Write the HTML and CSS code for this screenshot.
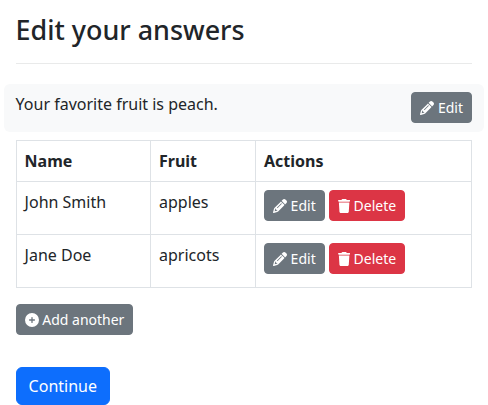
FILE: index.html
```html
<!DOCTYPE html>
<html lang="en">
<head>
<meta charset="utf-8">
<title>Edit your answers</title>
<link rel="stylesheet" href="styles.css">
</head>
<body>
<svg class="sprite" aria-hidden="true">
<symbol id="pencil" viewBox="0 0 512 512"><path d="M410.3 231l11.3-11.3-33.9-33.9-62.1-62.1L291.7 89.8l-11.3 11.3-22.6 22.6L58.6 322.9c-10.4 10.4-18 23.3-22.2 37.4L1 480.7c-2.5 8.4-.2 17.5 6.1 23.7s15.3 8.5 23.7 6.1l120.3-35.4c14.1-4.2 27-11.8 37.4-22.2L387.7 253.7 410.3 231zM160 399.4l-9.1 22.7c-4 3.1-8.5 5.4-13.3 6.9L59.4 452l23-78.1c1.4-4.9 3.8-9.4 6.9-13.3l22.7-9.1v32c0 8.8 7.2 16 16 16h32zM362.7 18.7L348.3 33.2 325.7 55.8 314.3 67.1l33.9 33.9 62.1 62.1 33.9 33.9 11.3-11.3 22.6-22.6 14.5-14.5c25-25 25-65.5 0-90.5L453.3 18.7c-25-25-65.5-25-90.5 0zm-47.4 168l-144 144c-6.2 6.2-16.4 6.2-22.6 0s-6.2-16.4 0-22.6l144-144c6.2-6.2 16.4-6.2 22.6 0s6.2 16.4 0 22.6z"/></symbol>
<symbol id="trash" viewBox="0 0 448 512"><path d="M135.2 17.7L128 32H32C14.3 32 0 46.3 0 64S14.3 96 32 96H416c17.7 0 32-14.3 32-32s-14.3-32-32-32H320l-7.2-14.3C307.4 6.8 296.3 0 284.2 0H163.8c-12.1 0-23.2 6.8-28.6 17.7zM416 128H32L53.2 467c1.6 25.3 22.6 45 47.9 45H346.9c25.3 0 46.3-19.7 47.9-45L416 128z"/></symbol>
<symbol id="circle-plus" viewBox="0 0 512 512"><path d="M256 512A256 256 0 1 0 256 0a256 256 0 1 0 0 512zM232 344V280H168c-13.3 0-24-10.7-24-24s10.7-24 24-24h64V168c0-13.3 10.7-24 24-24s24 10.7 24 24v64h64c13.3 0 24 10.7 24 24s-10.7 24-24 24H280v64c0 13.3-10.7 24-24 24s-24-10.7-24-24z"/></symbol>
</svg>
<main class="page">
<h1 class="title">Edit your answers</h1>
<hr class="rule">
<div class="review">
<div class="review-text">Your favorite fruit is peach.</div>
<a class="btn btn-sm btn-secondary"><svg class="icon"><use href="#pencil"/></svg> Edit</a>
</div>
<table class="table">
<thead><tr><th class="col-name">Name</th><th class="col-fruit">Fruit</th><th>Actions</th></tr></thead>
<tbody>
<tr><td>John Smith</td><td>apples</td><td><div class="actions"><a class="btn btn-sm btn-secondary"><svg class="icon"><use href="#pencil"/></svg> Edit</a><a class="btn btn-sm btn-danger"><svg class="icon icon-trash"><use href="#trash"/></svg> Delete</a></div></td></tr>
<tr><td>Jane Doe</td><td>apricots</td><td><div class="actions"><a class="btn btn-sm btn-secondary"><svg class="icon"><use href="#pencil"/></svg> Edit</a><a class="btn btn-sm btn-danger"><svg class="icon icon-trash"><use href="#trash"/></svg> Delete</a></div></td></tr>
</tbody>
</table>
<div class="add"><a class="btn btn-sm btn-secondary"><svg class="icon"><use href="#circle-plus"/></svg> Add another</a></div>
<button class="btn btn-primary" type="button">Continue</button>
</main>
</body>
</html>
```
FILE: styles.css
```css
* { box-sizing: border-box; }
body {
  margin: 0;
  background: #fff;
  color: #212529;
  font: 400 16px/1.5 "Noto Sans", "Liberation Sans", sans-serif;
  overflow: hidden;
}
.sprite { display: none; }
.page { padding: 13px 16px 0 15.6px; }
.title {
  margin: 0 0 16px;
  font-size: 26.9px;
  font-weight: 500;
  line-height: 34px;
}
.rule { margin: 0 0 20px; border: 0; border-top: 1px solid #e9eaea; }
.review {
  display: flex;
  justify-content: space-between;
  align-items: flex-start;
  height: 48px;
  margin: 0 -12px 8px;
  padding: 8px 12px;
  border-radius: 6px;
  background: #f8f9fa;
}
.btn {
  display: inline-block;
  padding: 6px 12px;
  border: 1px solid transparent;
  border-radius: 6px;
  color: #fff;
  font: inherit;
  white-space: nowrap;
}
.btn-sm { padding: 4px 8px; border-radius: 4px; font-size: 14px; line-height: 21px; }
.btn-secondary { background: #6c757d; border-color: #6c757d; }
.btn-danger { background: #dc3545; border-color: #dc3545; }
.btn-primary { display: block; background: #0d6efd; border-color: #0d6efd; }
.icon { width: 14px; height: 14px; fill: currentColor; vertical-align: -2px; }
.icon-trash { width: 12.25px; }
.table {
  width: 456px;
  margin: 0 0 16px;
  border-collapse: collapse;
  table-layout: fixed;
}
.table th, .table td {
  padding: 8px;
  border: 1px solid #dee2e6;
  text-align: left;
  vertical-align: top;
}
.table th { font-weight: 700; }
.table td { height: 53px; }
.col-name { width: 134.4px; }
.col-fruit { width: 105px; }
.actions { display: flex; gap: 4px; }
.add { display: flex; margin-bottom: 32px; }
```
